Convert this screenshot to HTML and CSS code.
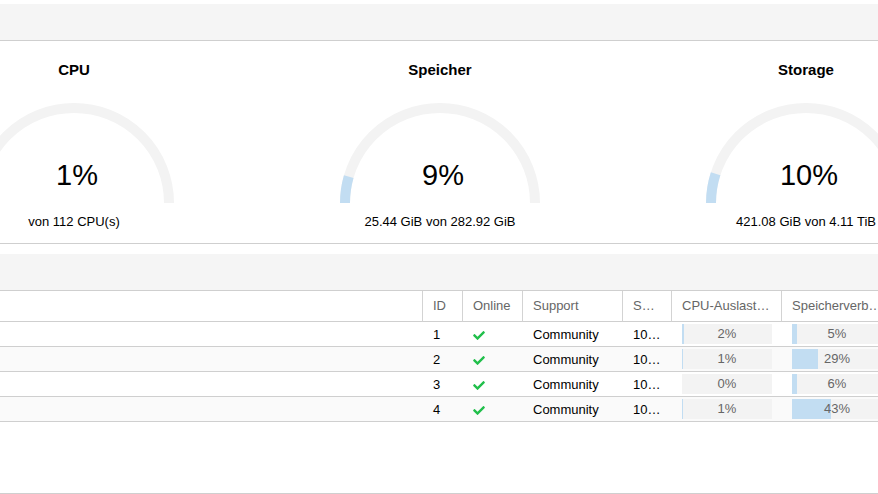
FILE: index.html
```html
<!DOCTYPE html>
<html lang="de">
<head>
    <meta charset="UTF-8">
    <title>Datacenter</title>
    <link rel="stylesheet" href="styles.css">
</head>
<body>
    <div class="page">
        <section class="panel">
            <div class="panel-header"></div>
            <div class="panel-body gauges">
                <div class="gauge">
                    <h3 class="gauge-title">CPU</h3>
                    <div class="gauge-dial">
                        <svg viewBox="0 0 200 100" width="200" height="100">
                            <path class="track" d="M5 100 A95 95 0 0 1 195 100" pathLength="100"/>
                            <path class="fill" d="M5 100 A95 95 0 0 1 195 100" pathLength="100" stroke-dasharray="1 100"/>
                        </svg>
                        <span class="gauge-value">1%</span>
                    </div>
                    <p class="gauge-text">von 112 CPU(s)</p>
                </div>
                <div class="gauge">
                    <h3 class="gauge-title">Speicher</h3>
                    <div class="gauge-dial">
                        <svg viewBox="0 0 200 100" width="200" height="100">
                            <path class="track" d="M5 100 A95 95 0 0 1 195 100" pathLength="100"/>
                            <path class="fill" d="M5 100 A95 95 0 0 1 195 100" pathLength="100" stroke-dasharray="9 100"/>
                        </svg>
                        <span class="gauge-value">9%</span>
                    </div>
                    <p class="gauge-text">25.44 GiB von 282.92 GiB</p>
                </div>
                <div class="gauge">
                    <h3 class="gauge-title">Storage</h3>
                    <div class="gauge-dial">
                        <svg viewBox="0 0 200 100" width="200" height="100">
                            <path class="track" d="M5 100 A95 95 0 0 1 195 100" pathLength="100"/>
                            <path class="fill" d="M5 100 A95 95 0 0 1 195 100" pathLength="100" stroke-dasharray="10 100"/>
                        </svg>
                        <span class="gauge-value">10%</span>
                    </div>
                    <p class="gauge-text">421.08 GiB von 4.11 TiB</p>
                </div>
            </div>
        </section>

        <section class="panel">
            <div class="panel-header"></div>
            <div class="panel-body">
                <table class="grid">
                    <thead>
                        <tr>
                            <th class="col-name">Name</th>
                            <th class="col-id">ID</th>
                            <th class="col-online">Online</th>
                            <th class="col-support">Support</th>
                            <th class="col-addr">Server-Adresse</th>
                            <th class="col-cpu">CPU-Auslastung</th>
                            <th class="col-mem">Speicherverbrauch</th>
                        </tr>
                    </thead>
                    <tbody>
                        <tr>
                            <td>pve01</td>
                            <td>1</td>
                            <td><svg class="check" viewBox="0 60 512 392" width="12" height="9"><path d="M173.9 439.4l-166.4-166.4c-10-10-10-26.2 0-36.2l36.2-36.2c10-10 26.2-10 36.2 0L192 312.7 432.1 72.6c10-10 26.2-10 36.2 0l36.2 36.2c10 10 10 26.2 0 36.2l-294.4 294.4c-10 10-26.2 10-36.2 0z"/></svg></td>
                            <td>Community</td>
                            <td>10.10.0.11</td>
                            <td><div class="bar"><div class="bar-fill" style="width: 2%"></div><span>2%</span></div></td>
                            <td><div class="bar"><div class="bar-fill" style="width: 5%"></div><span>5%</span></div></td>
                        </tr>
                        <tr>
                            <td>pve02</td>
                            <td>2</td>
                            <td><svg class="check" viewBox="0 60 512 392" width="12" height="9"><path d="M173.9 439.4l-166.4-166.4c-10-10-10-26.2 0-36.2l36.2-36.2c10-10 26.2-10 36.2 0L192 312.7 432.1 72.6c10-10 26.2-10 36.2 0l36.2 36.2c10 10 10 26.2 0 36.2l-294.4 294.4c-10 10-26.2 10-36.2 0z"/></svg></td>
                            <td>Community</td>
                            <td>10.10.0.12</td>
                            <td><div class="bar"><div class="bar-fill" style="width: 1%"></div><span>1%</span></div></td>
                            <td><div class="bar"><div class="bar-fill" style="width: 29%"></div><span>29%</span></div></td>
                        </tr>
                        <tr>
                            <td>pve03</td>
                            <td>3</td>
                            <td><svg class="check" viewBox="0 60 512 392" width="12" height="9"><path d="M173.9 439.4l-166.4-166.4c-10-10-10-26.2 0-36.2l36.2-36.2c10-10 26.2-10 36.2 0L192 312.7 432.1 72.6c10-10 26.2-10 36.2 0l36.2 36.2c10 10 10 26.2 0 36.2l-294.4 294.4c-10 10-26.2 10-36.2 0z"/></svg></td>
                            <td>Community</td>
                            <td>10.10.0.13</td>
                            <td><div class="bar"><div class="bar-fill" style="width: 0%"></div><span>0%</span></div></td>
                            <td><div class="bar"><div class="bar-fill" style="width: 6%"></div><span>6%</span></div></td>
                        </tr>
                        <tr>
                            <td>pve04</td>
                            <td>4</td>
                            <td><svg class="check" viewBox="0 60 512 392" width="12" height="9"><path d="M173.9 439.4l-166.4-166.4c-10-10-10-26.2 0-36.2l36.2-36.2c10-10 26.2-10 36.2 0L192 312.7 432.1 72.6c10-10 26.2-10 36.2 0l36.2 36.2c10 10 10 26.2 0 36.2l-294.4 294.4c-10 10-26.2 10-36.2 0z"/></svg></td>
                            <td>Community</td>
                            <td>10.10.0.14</td>
                            <td><div class="bar"><div class="bar-fill" style="width: 1%"></div><span>1%</span></div></td>
                            <td><div class="bar"><div class="bar-fill" style="width: 43%"></div><span>43%</span></div></td>
                        </tr>
                    </tbody>
                </table>
            </div>
        </section>
    </div>
</body>
</html>
```

FILE: styles.css
```css
* {
    box-sizing: border-box;
}

body {
    margin: 0;
    overflow: hidden;
    font-family: "Liberation Sans", Arial, sans-serif;
    background: #fff;
    color: #000;
}

/* the view is scrolled a bit to the right */
.page {
    width: 1098px;
    margin-left: -109px;
    padding-top: 4px;
}

.panel + .panel {
    margin-top: 10px;
}

.panel-header {
    height: 37px;
    background: #f5f5f5;
    border-bottom: 1px solid #cfcfcf;
}

.panel-body {
    height: 203px;
    border-bottom: 1px solid #cfcfcf;
    overflow: hidden;
}

/* gauges */
.gauges {
    display: flex;
}

.gauge {
    width: 366px;
    display: flex;
    flex-direction: column;
    align-items: center;
    padding-top: 19px;
}

.gauge-title {
    margin: 0;
    font-size: 15px;
    line-height: 20px;
    font-weight: bold;
}

.gauge-dial {
    position: relative;
    width: 200px;
    height: 100px;
    margin-top: 23px;
}

.gauge-dial svg {
    display: block;
}

.track,
.fill {
    fill: none;
    stroke-width: 10;
}

.track {
    stroke: #f3f3f3;
}

.fill {
    stroke: #c2ddf2;
}

.gauge-value {
    position: absolute;
    left: 0;
    right: 0;
    top: 58px;
    padding-left: 6px;
    text-align: center;
    font-size: 29px;
    line-height: 29px;
}

.gauge-text {
    margin: 11px 0 0;
    font-size: 13px;
    line-height: 16px;
}

/* node grid */
.grid {
    border-collapse: separate;
    border-spacing: 0;
    table-layout: fixed;
    width: 1003px;
    font-size: 13px;
}

.grid th,
.grid td {
    padding: 0 10px;
    white-space: nowrap;
    overflow: hidden;
    text-overflow: ellipsis;
    text-align: left;
    border-bottom: 1px solid #cfcfcf;
}

.grid th {
    line-height: 30px;
    font-weight: normal;
    color: #666;
    border-right: 1px solid #d3d3d3;
}

.grid td {
    padding-top: 1px;
    line-height: 23px;
}

.grid tbody tr:nth-child(even) td {
    background: #fafafa;
}

.col-name { width: 532px; }
.col-id { width: 40px; }
.col-online { width: 60px; }
.col-support { width: 100px; }
.col-addr { width: 49px; }
.col-cpu { width: 110px; }
.col-mem { width: 112px; }

.check {
    vertical-align: middle;
    fill: #21bf4b;
}

.bar {
    position: relative;
    width: 90px;
    height: 20px;
    margin: 1px 0 2px;
    background: #f3f3f3;
    color: #666;
    text-align: center;
    line-height: 20px;
}

.bar-fill {
    position: absolute;
    left: 0;
    top: 0;
    bottom: 0;
    background: #c2ddf2;
}

.bar span {
    position: relative;
}
```
